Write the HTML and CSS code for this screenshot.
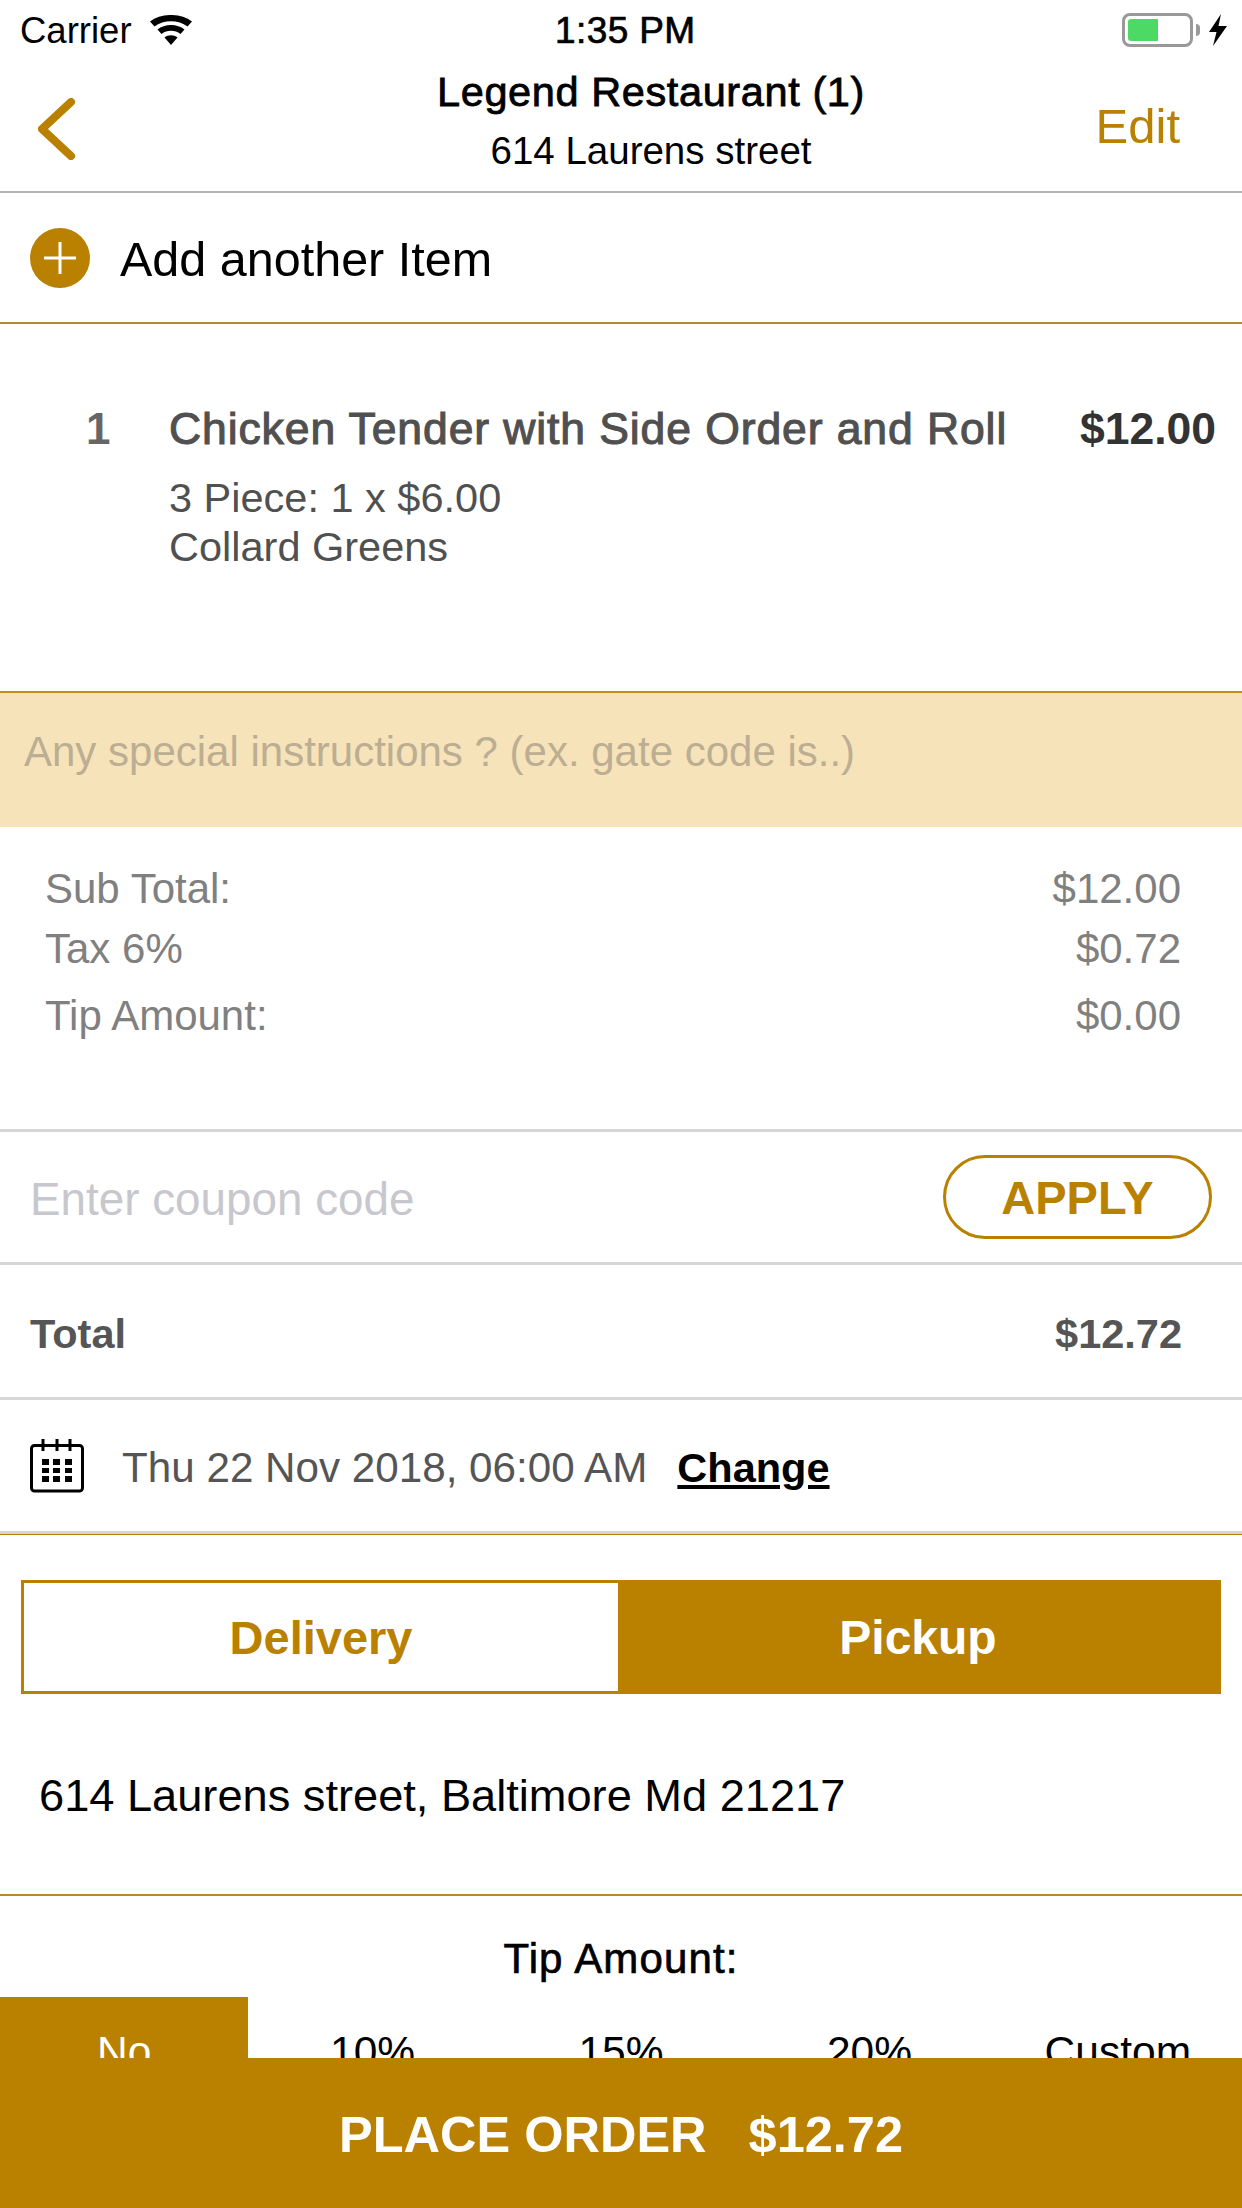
FILE: index.html
```html
<!DOCTYPE html>
<html lang="en">
<head>
  <meta charset="UTF-8">
  <meta name="viewport" content="width=device-width, initial-scale=1.0">
  <link rel="stylesheet" href="styles.css">
  <title>Cart</title>
</head>
<body>
  <div class="screen">
    <div class="status">
      <div class="statusLeft">
        <span>Carrier</span>
        <svg class="wifi" width="42" height="30" viewBox="0 0 42 30">
          <path d="M21 30 L14.5 22.5 C18 19.4 24 19.4 27.5 22.5 Z M11.5 19 L7.5 14.5 C14.5 8.5 27.5 8.5 34.5 14.5 L30.5 19 C25 14.6 17 14.6 11.5 19 Z M4.5 11.5 L0 6.5 C11 -2.2 31 -2.2 42 6.5 L37.5 11.5 C28.5 4.5 13.5 4.5 4.5 11.5 Z" fill="#000"/>
        </svg>
      </div>
      <div class="time">1:35 PM</div>
      <div class="statusRight">
        <div class="battery"><div class="charge"></div></div>
        <div class="batteryTip"></div>
        <svg width="18" height="32" viewBox="0 0 18 32"><path d="M12 0 L0 18 H7.5 L4 32 L18 12 H9.5 Z" fill="#000"/></svg>
      </div>
    </div>

    <div class="nav">
      <svg class="back" width="38" height="62" viewBox="0 0 38 62">
        <path d="M33 4 L4 31 L33 58" fill="none" stroke="#ba8000" stroke-width="8" stroke-linecap="round" stroke-linejoin="round"/>
      </svg>
      <div class="navTitle">
        <div class="restName">Legend Restaurant (1)</div>
        <div class="restAddr">614 Laurens street</div>
      </div>
      <div class="edit">Edit</div>
    </div>

    <div class="addRow">
      <svg width="60" height="60" viewBox="0 0 60 60">
        <circle cx="30" cy="30" r="30" fill="#ba8000"/>
        <path d="M30 14 V46 M14 30 H46" stroke="#fff" stroke-width="3"/>
      </svg>
      <span>Add another Item</span>
    </div>

    <div class="item">
      <div class="qty">1</div>
      <div class="itemInfo">
        <div class="itemName">Chicken Tender with Side Order and Roll</div>
        <div class="itemOpt">3 Piece: 1 x $6.00</div>
        <div class="itemOpt">Collard Greens</div>
      </div>
      <div class="itemPrice">$12.00</div>
    </div>

    <div class="special">Any special instructions ? (ex. gate code is..)</div>

    <div class="totals">
      <div class="line"><span>Sub Total:</span><span>$12.00</span></div>
      <div class="line"><span>Tax 6%</span><span>$0.72</span></div>
      <div class="line tipLine"><span>Tip Amount:</span><span>$0.00</span></div>
    </div>

    <div class="coupon">
      <span class="couponText">Enter coupon code</span>
      <div class="apply">APPLY</div>
    </div>

    <div class="total"><span>Total</span><span>$12.72</span></div>

    <div class="date">
      <svg width="54" height="54" viewBox="0 0 54 54">
        <rect x="1.5" y="6.5" width="51" height="45.5" rx="3" fill="none" stroke="#000" stroke-width="3"/>
        <path d="M13 0 V12 M27 0 V12 M40 0 V12" stroke="#000" stroke-width="3"/>
        <path d="M12 20 h7 v6 h-7 z M23 20 h7 v6 h-7 z M35 20 h7 v6 h-7 z M12 29 h7 v5 h-7 z M23 29 h7 v5 h-7 z M35 29 h7 v5 h-7 z M12 37 h7 v6 h-7 z M23 37 h7 v6 h-7 z M35 37 h7 v6 h-7 z" fill="#000"/>
      </svg>
      <span class="dateText">Thu 22 Nov 2018, 06:00 AM</span>
      <span class="change">Change</span>
    </div>

    <div class="orderType">
      <div class="tabs">
        <div class="tab">Delivery</div>
        <div class="tab tabOn">Pickup</div>
      </div>
      <div class="pickupAddr">614 Laurens street, Baltimore Md 21217</div>
    </div>

    <div class="tipBox">
      <div class="tipTitle">Tip Amount:</div>
      <div class="tipRow">
        <div class="tipCell tipOn">No</div>
        <div class="tipCell">10%</div>
        <div class="tipCell">15%</div>
        <div class="tipCell">20%</div>
        <div class="tipCell">Custom</div>
      </div>
    </div>

    <div class="placeOrder"><span>PLACE ORDER</span><span>$12.72</span></div>
  </div>
</body>
</html>
```

FILE: styles.css
```css
* {
  margin: 0;
  padding: 0;
  box-sizing: border-box;
}

body {
  background-color: #fff;
  font-family: "Liberation Sans", Arial, sans-serif;
}

.screen {
  width: 1242px;
  height: 2208px;
  position: relative;
  overflow: hidden;
  background: #fff;
}

.status {
  height: 60px;
  padding: 0 15px 0 20px;
  display: flex;
  align-items: center;
  justify-content: space-between;
  position: relative;
  font-size: 36.5px;
  color: #000;
}

.statusLeft {
  display: flex;
  align-items: center;
  gap: 18px;
  margin-top: 2px;
}

.wifi {
  margin-top: -2px;
}

.time {
  position: absolute;
  left: 555px;
  margin-top: 2px;
  font-size: 37px;
  letter-spacing: 0.4px;
  -webkit-text-stroke: 0.7px #000;
}

.statusRight {
  display: flex;
  align-items: center;
}

.battery {
  width: 71px;
  height: 34px;
  border: 3px solid #999;
  border-radius: 8px;
  padding: 3px;
}

.charge {
  width: 30px;
  height: 22px;
  background: #4cd964;
  border-radius: 3px 0 0 3px;
}

.batteryTip {
  width: 4px;
  height: 12px;
  background: #999;
  border-radius: 0 4px 4px 0;
  margin: 0 9px 0 3px;
}

.nav {
  height: 133px;
  border-bottom: 2px solid #b5b5b5;
  display: flex;
  align-items: center;
  position: relative;
}

.back {
  margin: 6px 0 0 38px;
}

.navTitle {
  position: absolute;
  left: 0;
  right: 0;
  top: 0;
  padding-left: 60px;
  text-align: center;
  color: #000;
}

.restName {
  font-size: 41.5px;
  letter-spacing: 0.6px;
  -webkit-text-stroke: 0.8px #000;
  line-height: 50px;
  margin-top: 7px;
}

.restAddr {
  font-size: 38.5px;
  line-height: 42px;
  margin-top: 13px;
}

.edit {
  margin-left: auto;
  margin-right: 62px;
  margin-top: 1px;
  font-size: 49px;
  color: #ba8000;
}

.addRow {
  height: 131px;
  border-bottom: 2px solid #b08a3a;
  padding-left: 30px;
  display: flex;
  align-items: center;
  gap: 30px;
  font-size: 48.5px;
  color: #000;
}

.addRow span {
  margin-top: 3px;
}

.item {
  height: 367px;
  padding: 78px 26px 0 86px;
  display: flex;
  color: #505050;
}

.qty {
  width: 83px;
  font-size: 44px;
  font-weight: bold;
  line-height: 54px;
  color: #666;
}

.itemInfo {
  flex: 1;
}

.itemName {
  font-size: 44.5px;
  letter-spacing: 0.9px;
  -webkit-text-stroke: 1.1px #505050;
  line-height: 54px;
  margin-bottom: 17px;
}

.itemOpt {
  font-size: 41.5px;
  line-height: 49px;
}

.itemPrice {
  font-size: 44.5px;
  font-weight: bold;
  line-height: 54px;
  color: #333;
}

.special {
  height: 136px;
  border-top: 2px solid #bf8f1f;
  background: #f6e3b9;
  padding: 35px 24px 0;
  font-size: 42px;
  color: #bcae93;
}

.totals {
  height: 302px;
  padding: 32px 61px 0 45px;
  font-size: 42px;
  color: #808080;
}

.line {
  display: flex;
  justify-content: space-between;
  line-height: 60px;
}

.tipLine {
  margin-top: 7px;
}

.coupon {
  height: 133px;
  border-top: 3px solid #d6d6d6;
  padding: 0 30px;
  display: flex;
  align-items: center;
  justify-content: space-between;
}

.couponText {
  font-size: 45.8px;
  margin-top: 5px;
  color: #c7c7cd;
}

.apply {
  width: 269px;
  height: 84px;
  border: 3px solid #ba8000;
  border-radius: 42px;
  text-align: center;
  line-height: 80px;
  font-size: 47px;
  font-weight: bold;
  color: #ba8000;
}

.total {
  height: 135px;
  border-top: 3px solid #d6d6d6;
  padding: 5px 60px 0 30px;
  display: flex;
  align-items: center;
  justify-content: space-between;
  font-size: 41.5px;
  font-weight: bold;
  color: #555;
}

.date {
  height: 137px;
  border-top: 3px solid #d6d6d6;
  border-bottom: 3px solid #d6d6d6;
  padding-left: 30px;
  display: flex;
  align-items: center;
  font-size: 42.2px;
  color: #555;
}

.dateText {
  margin-left: 38px;
  margin-top: 5px;
}

.change {
  margin-left: 30px;
  margin-top: 5px;
  font-weight: bold;
  font-size: 41.5px;
  color: #000;
  text-decoration: underline;
}

.orderType {
  border-top: 1px solid #ba8000;
  padding-top: 45px;
}

.tabs {
  margin: 0 21px;
  height: 114px;
  display: flex;
  border: 3px solid #ba8000;
}

.tab {
  flex: 0 0 594px;
  text-align: center;
  line-height: 110px;
  font-size: 47px;
  font-weight: bold;
  color: #ba8000;
}

.tabOn {
  flex: 1;
  font-size: 48px;
  background: #ba8000;
  color: #fff;
}

.pickupAddr {
  height: 202px;
  padding: 76px 0 0 39px;
  font-size: 45.2px;
  color: #000;
  border-bottom: 2px solid #b98a26;
}

.tipTitle {
  height: 101px;
  padding-top: 39px;
  text-align: center;
  font-size: 42px;
  letter-spacing: 1.15px;
  -webkit-text-stroke: 0.7px #000;
  color: #000;
}

.tipRow {
  display: flex;
  height: 112px;
}

.tipCell {
  flex: 1;
  text-align: center;
  font-size: 42.5px;
  padding-top: 31px;
  color: #000;
}

.tipOn {
  background: #ba8000;
  color: #fff;
}

.placeOrder {
  position: absolute;
  left: 0;
  right: 0;
  bottom: 0;
  height: 150px;
  padding-top: 2px;
  background: #ba8000;
  color: #fff;
  font-size: 50.5px;
  font-weight: bold;
  display: flex;
  align-items: center;
  justify-content: center;
  gap: 42px;
}
```
